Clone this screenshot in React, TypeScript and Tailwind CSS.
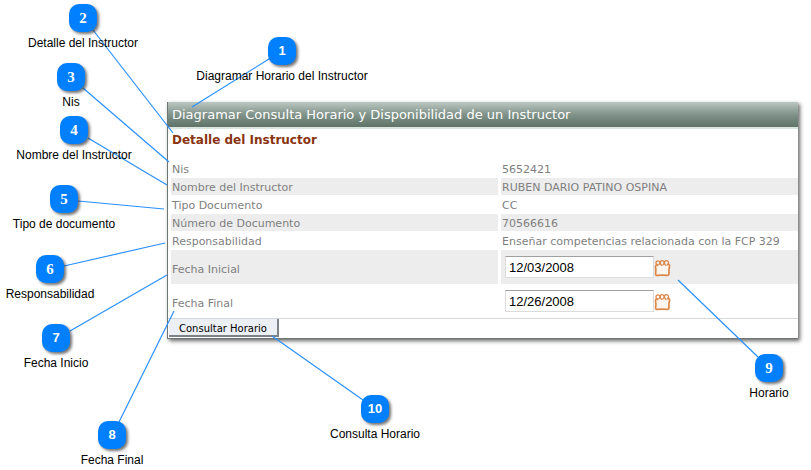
import { useState } from 'react';

const callouts = [
  { id: 1, label: 'Diagramar Horario del Instructor', place: 'left-[282px] top-[37px]', digit: "font-['Liberation_Sans',sans-serif] text-[13px] font-bold", line: [269, 59, 192, 107] },
  { id: 2, label: 'Detalle del Instructor', place: 'left-[83px] top-[4px]', digit: "font-['Liberation_Serif',serif] text-[15px] font-bold", line: [93, 30, 173, 133] },
  { id: 3, label: 'Nis', place: 'left-[71px] top-[63px]', digit: "font-['Liberation_Serif',serif] text-[15px] font-bold", line: [83, 88, 169, 162] },
  { id: 4, label: 'Nombre del Instructor', place: 'left-[74px] top-[116px]', digit: "font-['Liberation_Serif',serif] text-[15px] font-bold", line: [88, 138, 167, 185] },
  { id: 5, label: 'Tipo de documento', place: 'left-[64px] top-[185px]', digit: "font-['Liberation_Serif',serif] text-[15px] font-bold", line: [78, 201, 164, 209] },
  { id: 6, label: 'Responsabilidad', place: 'left-[50px] top-[255px]', digit: "font-['Liberation_Serif',serif] text-[15px] font-bold", line: [64, 266, 165, 243] },
  { id: 7, label: 'Fecha Inicio', place: 'left-[56px] top-[324px]', digit: "font-['Liberation_Sans',sans-serif] text-[13px] font-bold", line: [70, 331, 167, 275] },
  { id: 8, label: 'Fecha Final', place: 'left-[112px] top-[421px]', digit: "font-['Liberation_Sans',sans-serif] text-[13px] font-bold", line: [119, 422, 174, 311] },
  { id: 9, label: 'Horario', place: 'left-[769px] top-[354px]', digit: "font-['Liberation_Serif',serif] text-[15px] font-bold", line: [758, 357, 678, 280] },
  { id: 10, label: 'Consulta Horario', place: 'left-[375px] top-[395px]', digit: "font-['Liberation_Sans',sans-serif] text-[13px] font-bold", line: [363, 400, 272, 336] },
];

const details = [
  { name: 'Nis', value: '5652421' },
  { name: 'Nombre del Instructor', value: 'RUBEN DARIO PATINO OSPINA' },
  { name: 'Tipo Documento', value: 'CC' },
  { name: 'Número de Documento', value: '70566616' },
  { name: 'Responsabilidad', value: 'Enseñar competencias relacionada con la FCP 329' },
];

function CalendarIcon() {
  return (
    <svg width="17" height="18" viewBox="0 0 17 18" fill="none" stroke="#dd8647" aria-hidden="true">
      <path
        d="M3 5.5Q1.3 6 1.5 8Q2.3 11.5 1.6 14.5Q1.5 16.6 3.5 16.4Q8 15.8 13 16.4Q15.2 16.5 15 14.4Q14.6 10.5 15.5 7.5Q15.8 5.6 14.2 5.2"
        fill="#fdf5ee"
        strokeWidth="1.7"
        strokeLinecap="round"
      />
      <path
        d="M3.6 6.6C1.4 5 1.4 2.2 3.6 1.8C6 1.6 6.6 4.8 4.8 5.8M7.8 6.4C5.6 5 5.8 2 7.8 1.6C10.2 1.4 10.8 4.8 9 5.8M12 6.4C9.8 5 10 2 12 1.6C14.6 1.4 15.6 4.4 13.4 5.8"
        strokeWidth="1.3"
        strokeLinecap="round"
      />
    </svg>
  );
}

function DateRow({ id, label, initial, shaded }: { id: string; label: string; initial: string; shaded?: boolean }) {
  const [value, setValue] = useState(initial);

  return (
    <tr className={shaded ? 'bg-[#ededed]' : 'bg-white'}>
      <th scope="row" className="h-[34px] border-r-[3px] border-white p-0 pt-1 pl-px text-left font-normal">
        <label htmlFor={id}>{label}</label>
      </th>
      <td className="p-0 pl-1">
        <div className="flex items-center">
          <input
            id={id}
            type="text"
            value={value}
            onChange={(e) => setValue(e.target.value)}
            className="h-[22px] w-[149px] border border-[#dcdcdc] border-t-[#a0a0a0] bg-white px-[3px] font-['Liberation_Sans',sans-serif] text-[13px] text-black"
          />
          <button type="button" aria-label={`Calendario ${label}`} className="mt-0.5">
            <CalendarIcon />
          </button>
        </div>
      </td>
    </tr>
  );
}

function Callout({ item }: { item: (typeof callouts)[number] }) {
  return (
    <div className={`absolute flex w-0 flex-col items-center whitespace-nowrap ${item.place}`}>
      <span
        className={`flex size-7 shrink-0 items-center justify-center rounded-[10px] bg-[#0080ff] text-white shadow-[2px_2px_3px_rgba(0,0,0,0.55)] ${item.digit}`}
      >
        {item.id}
      </span>
      <span className="mt-[3px] font-['Liberation_Sans',sans-serif] text-xs leading-4 text-black">{item.label}</span>
    </div>
  );
}

export default function App() {
  return (
    <div className="relative min-h-screen overflow-hidden bg-white pt-[102px] pr-[13px] pb-8 pl-[167px] font-['DejaVu_Sans',Verdana,sans-serif]">
      <form
        onSubmit={(e) => e.preventDefault()}
        className="border-b border-l border-[#6f7572] bg-white shadow-[2px_2px_4px_rgba(0,0,0,0.6)]"
      >
        <h1 className="h-[27px] border-b-2 border-[#dce6e1] bg-linear-to-b from-[#bcc8c2] via-[#81938a] to-[#5f7368] pl-1 text-[13px] leading-[25px] whitespace-nowrap text-white">
          Diagramar Consulta Horario y Disponibilidad de un Instructor
        </h1>
        <h2 className="h-[31px] pl-1 text-xs leading-[22px] font-bold text-[#8a3311]">Detalle del Instructor</h2>

        <table className="ml-[3px] w-[calc(100%-3px)] table-fixed border-separate border-spacing-0 text-[11px] leading-[15px] text-[#7f7f7f]">
          <colgroup>
            <col className="w-[330px]" />
            <col />
          </colgroup>
          <tbody>
            {details.map((row, i) => (
              <tr key={row.name} className={i % 2 ? 'bg-[#ededed]' : 'bg-white'}>
                <th scope="row" className="h-[18px] border-r-[3px] border-b border-white p-0 pt-0.5 pl-px text-left font-normal">
                  {row.name}
                </th>
                <td className="border-b border-white p-0 pt-0.5 pl-px whitespace-nowrap">{row.value}</td>
              </tr>
            ))}
            <DateRow id="fecha-inicial" label="Fecha Inicial" initial="12/03/2008" shaded />
            <DateRow id="fecha-final" label="Fecha Final" initial="12/26/2008" />
          </tbody>
        </table>

        <div className="flex border-t border-[#d4d8d8] pb-px pl-px">
          <button
            type="submit"
            className="h-[18px] border-r-2 border-b-2 border-[#7d8286] bg-[#eceff4] px-2.5 pt-0.5 text-[10px] leading-4 text-black"
          >
            Consultar Horario
          </button>
        </div>
      </form>

      {/* Leader lines from each badge to its target */}
      <svg className="pointer-events-none absolute top-0 left-0" width="811" height="470" stroke="#2a90ff" strokeWidth="1.2" aria-hidden="true">
        {callouts.map(({ id, line: [x1, y1, x2, y2] }) => (
          <line key={id} x1={x1} y1={y1} x2={x2} y2={y2} />
        ))}
      </svg>
      {callouts.map((item) => (
        <Callout key={item.id} item={item} />
      ))}
    </div>
  );
}
